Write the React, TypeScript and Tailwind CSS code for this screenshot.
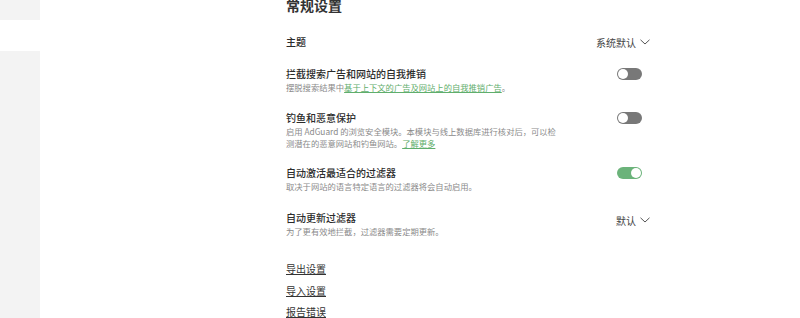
import React from "react";

const font = { fontFamily: '"Noto Sans CJK SC", "Noto Sans", sans-serif' };

function Toggle({ on }: { on?: boolean }) {
  return (
    <div
      className={`relative mr-[8px] w-[25px] h-[12px] rounded-full ${on ? "bg-[#6bb37a]" : "bg-[#787878]"}`}
    >
      <div
        className={`absolute top-[1px] w-[10px] h-[10px] rounded-full bg-white ${on ? "right-[1px]" : "left-[1px]"}`}
      />
    </div>
  );
}

function Chevron() {
  return (
    <svg width="10" height="6" viewBox="0 0 10 6" className="ml-[4px]">
      <path d="M0.5 0.8 L5 5 L9.5 0.8" fill="none" stroke="#555" strokeWidth="1" />
    </svg>
  );
}

function Row({
  title,
  sub,
  right,
  className,
}: {
  title: string;
  sub?: React.ReactNode;
  right?: React.ReactNode;
  className?: string;
}) {
  return (
    <div className={`flex items-start justify-between ${className || ""}`}>
      <div className="w-[270px]">
        <div className="text-[10px] leading-[14px] font-medium text-[#2b2b2b]">{title}</div>
        {sub && <div className="text-[8.3px] leading-[12px] text-[#8a8a8a]">{sub}</div>}
      </div>
      <div className="flex items-center h-[14px]">{right}</div>
    </div>
  );
}

export default function App() {
  return (
    <div className="flex w-[800px] h-[318px] bg-white overflow-hidden" style={font}>
      <div className="w-[40px] flex flex-col shrink-0">
        <div className="h-[20px] bg-[#f3f3f3]" />
        <div className="h-[31px] bg-white" />
        <div className="flex-1 bg-[#f3f3f3]" />
      </div>
      <div className="pl-[246px]">
        <div className="w-[364px] flex flex-col">
          <div className="mt-[-5px] text-[14px] leading-[20px] font-bold text-[#333]">常规设置</div>

          <Row
            className="mt-[20px]"
            title="主题"
            right={
              <span className="flex items-center text-[10px] text-[#444]">
                系统默认
                <Chevron />
              </span>
            }
          />

          <Row
            className="mt-[18px]"
            title="拦截搜索广告和网站的自我推销"
            sub={
              <span className="whitespace-nowrap">
                摆脱搜索结果中
                <span className="text-[#5fae6c] underline">基于上下文的广告及网站上的自我推销广告</span>。
              </span>
            }
            right={<Toggle />}
          />

          <Row
            className="mt-[18px]"
            title="钓鱼和恶意保护"
            sub={
              <>
                启用 AdGuard 的浏览安全模块。本模块与线上数据库进行核对后，可以检测潜在的恶意网站和钓鱼网站。
                <span className="text-[#5fae6c] underline">了解更多</span>
              </>
            }
            right={<Toggle />}
          />

          <Row
            className="mt-[17px]"
            title="自动激活最适合的过滤器"
            sub="取决于网站的语言特定语言的过滤器将会自动启用。"
            right={<Toggle on />}
          />

          <Row
            className="mt-[19px]"
            title="自动更新过滤器"
            sub="为了更有效地拦截，过滤器需要定期更新。"
            right={
              <span className="flex items-center text-[10px] text-[#444] mt-[4px]">
                默认
                <Chevron />
              </span>
            }
          />

          <div className="mt-[25px] flex flex-col items-start text-[10px] leading-[14px] text-[#333]">
            <span className="underline">导出设置</span>
            <span className="underline mt-[8px]">导入设置</span>
            <span className="underline mt-[7px]">报告错误</span>
          </div>
        </div>
      </div>
    </div>
  );
}
